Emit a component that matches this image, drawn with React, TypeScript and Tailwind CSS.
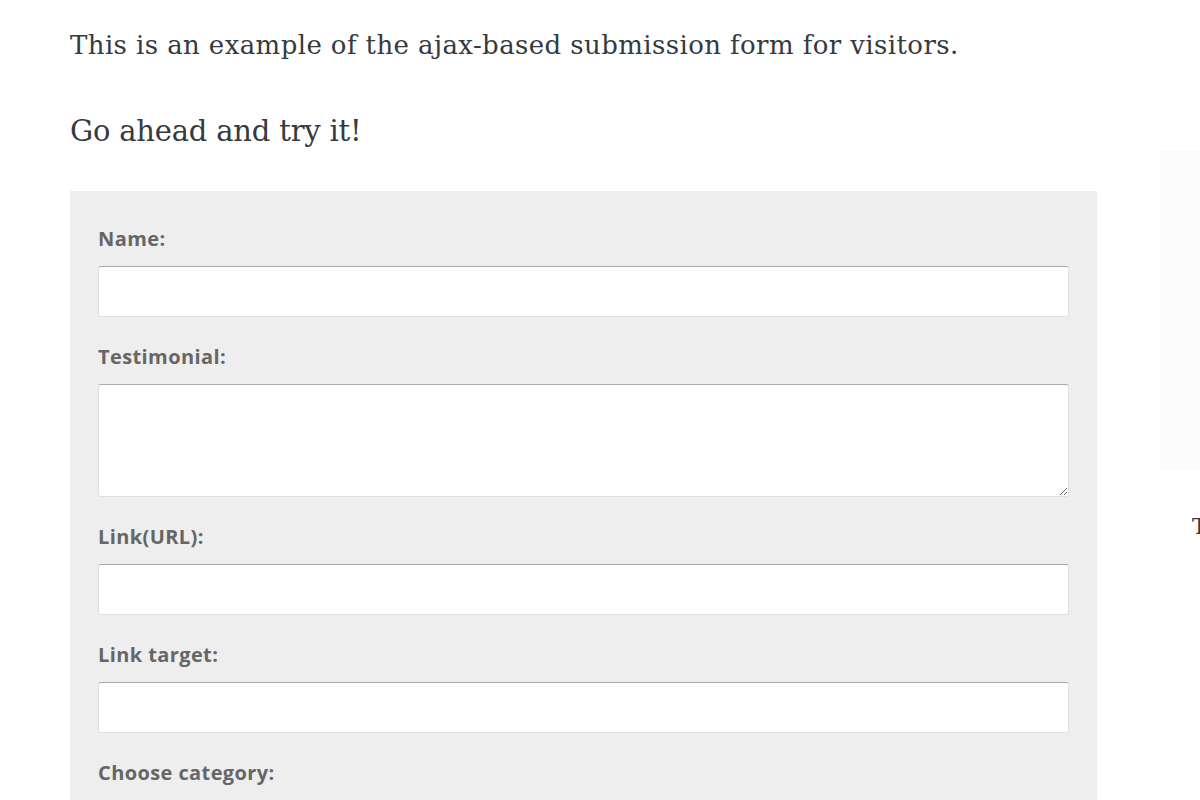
const labelCls =
  "block text-[20px] leading-[24px] font-bold tracking-[0.4px] text-[#666] mb-[15px] [font-family:'Open_Sans',sans-serif]";
const boxCls =
  "block w-full bg-white border border-[#dde1e6] border-t-[#a9a9a9] rounded-[3px] mb-[28px] outline-none";

function Field({ label, tall }: { label: string; tall?: boolean }) {
  return (
    <div>
      <label className={labelCls}>{label}</label>
      {tall ? (
        <textarea className={`${boxCls} h-[113px]`} />
      ) : (
        <input type="text" className={`${boxCls} h-[51px]`} />
      )}
    </div>
  );
}

export default function App() {
  return (
    <div className="w-[1200px] h-[800px] overflow-hidden bg-white flex">
      <main className="w-[1097px] pl-[70px] pt-[27px] shrink-0">
        <p className="text-[26px] leading-[36px] text-[#353a40] [font-family:'DejaVu_Serif',serif] tracking-[0.4px] whitespace-nowrap">
          This is an example of the ajax-based submission form for visitors.
        </p>
        <p className="mt-[48px] text-[29px] leading-[40px] text-[#353a40] [font-family:'DejaVu_Serif',serif] tracking-[-0.2px]">
          Go ahead and try it!
        </p>
        <form className="mt-[40px] bg-[#eeeeee] px-[28px] pt-[36px] pb-[20px]">
          <Field label="Name:" />
          <Field label="Testimonial:" tall />
          <Field label="Link(URL):" />
          <Field label="Link target:" />
          <div>
            <label className={labelCls}>Choose category:</label>
            <select className="block w-full h-[40px] bg-white border border-[#dde1e6] border-t-[#777] rounded-[3px]" />
          </div>
        </form>
      </main>
      <aside className="flex-1 relative">
        <div className="absolute left-[63px] top-[150px] w-[60px] h-[320px] bg-[#fcfcfc]" />
        <p className="absolute left-[95px] top-[510px] text-[22px] text-[#353a40] [font-family:'DejaVu_Serif',serif] whitespace-nowrap">
          Testimonials
        </p>
      </aside>
    </div>
  );
}
